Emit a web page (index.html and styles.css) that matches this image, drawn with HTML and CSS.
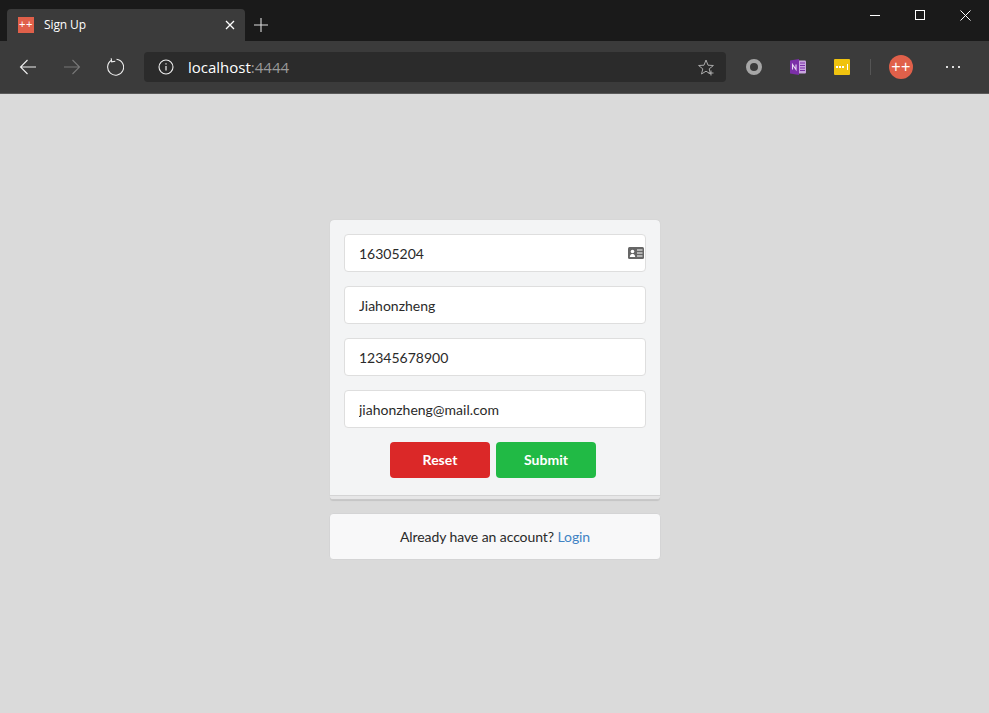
FILE: index.html
```html
<!DOCTYPE html>
<html lang="en">
<head>
<meta charset="UTF-8">
<meta name="viewport" content="width=device-width, initial-scale=1.0">
<title>Sign Up</title>
<link rel="stylesheet" href="styles.css">
</head>
<body>

<div class="titlebar">
  <div class="tab">
    <span class="favicon">++</span>
    <span class="tab-title">Sign Up</span>
    <svg class="tab-close" width="10" height="10" viewBox="0 0 10 10"><path d="M1 1l8 8M9 1l-8 8" stroke="#fff" stroke-width="1.3" fill="none"/></svg>
  </div>
  <svg class="new-tab" width="14" height="14" viewBox="0 0 14 14"><path d="M7 0v14M0 7h14" stroke="#ddd" stroke-width="1.1" fill="none"/></svg>
  <div class="window-btns">
    <svg width="10" height="10" viewBox="0 0 10 10"><path d="M0 5.500h10" stroke="#fff" fill="none"/></svg>
    <svg width="10" height="10" viewBox="0 0 10 10"><rect x=".5" y=".5" width="9" height="9" stroke="#fff" fill="none"/></svg>
    <svg width="11" height="11" viewBox="0 0 11 11"><path d="M.5.5l10 10M10.500.5l-10 10" stroke="#fff" fill="none"/></svg>
  </div>
</div>

<div class="toolbar">
  <svg class="nav-icon" width="18" height="16" viewBox="0 0 18 16"><path d="M17 8H1.500M8.500 1L1.500 8l7 7" stroke="#eee" stroke-width="1.1" fill="none"/></svg>
  <svg class="nav-icon" width="18" height="16" viewBox="0 0 18 16"><path d="M1 8h15.500M9.500 1l7 7-7 7" stroke="#777" stroke-width="1.1" fill="none"/></svg>
  <svg class="nav-icon" width="18" height="18" viewBox="0 0 18 18"><path d="M5.500 2.300A8 8 0 1 0 10.500 1.200M5.200 .2l.5 3.700 3.600-.6" stroke="#eee" stroke-width="1.1" fill="none"/></svg>
  <div class="address">
    <svg width="16" height="16" viewBox="0 0 16 16"><circle cx="8" cy="8" r="7" stroke="#eee" stroke-width="1.1" fill="none"/><path d="M8 7v4.500M8 4.200v1.400" stroke="#eee" stroke-width="1.2" fill="none"/></svg>
    <span class="url">localhost<span class="port">:4444</span></span>
    <svg class="star" width="17" height="17" viewBox="0 0 17 17"><path d="M8 1l2 5.200 5.400.3-4.200 3.400 1.300 5.100L8 12.200l-4.500 2.800 1.300-5.100L.6 6.500l5.400-.3z" stroke="#aaa" fill="none"/><path d="M13 11.500v5M10.500 14h5" stroke="#aaa" fill="none"/></svg>
  </div>
  <div class="extensions">
    <svg width="16" height="16" viewBox="0 0 16 16"><circle cx="8" cy="8" r="6" stroke="#a6a6a6" stroke-width="4" fill="none"/></svg>
    <svg width="16" height="16" viewBox="0 0 16 16"><rect x="7" y="1.500" width="9" height="13" rx="1" fill="#c9a6e0"/><path d="M0 1.500L9 0v16L0 14.500z" fill="#7b2fa8"/><path d="M10 4h5M10 6.500h5M10 9h5M10 11.500h5" stroke="#7b2fa8" fill="none"/><path d="M2.500 10.500v-5l3.500 5v-5" stroke="#e8d8f4" stroke-width="1.1" fill="none"/></svg>
    <svg width="16" height="16" viewBox="0 0 16 16"><rect width="16" height="16" rx="1" fill="#f0c30f"/><path d="M2 8h2M5 8h2M8 8h2" stroke="#fff" stroke-width="2" fill="none"/><path d="M13.500 5v6" stroke="#fff" fill="none"/></svg>
  </div>
  <div class="divider"></div>
  <div class="avatar">++</div>
  <div class="more"><span></span><span></span><span></span></div>
</div>

<main class="page">
  <form class="signup-card">
    <div class="field">
      <input class="input" type="text" value="16305204">
      <svg class="field-icon" width="16" height="12" viewBox="0 0 16 12"><rect width="16" height="12" rx="1.500" fill="#666"/><circle cx="4.500" cy="4.500" r="1.800" fill="#fff"/><path d="M1.800 10c0-4 5.400-4 5.400 0z" fill="#fff"/><path d="M9 3h5.500M9 6h5.500M9 9h5.500" stroke="#fff" stroke-width="1.200" fill="none"/></svg>
    </div>
    <input class="input" type="text" value="Jiahonzheng">
    <input class="input" type="text" value="12345678900">
    <input class="input" type="text" value="jiahonzheng@mail.com">
    <div class="actions">
      <button class="btn btn-reset" type="button">Reset</button>
      <button class="btn btn-submit" type="button">Submit</button>
    </div>
  </form>
  <div class="login-box">Already have an account? <a href="#">Login</a></div>
</main>

</body>
</html>
```
FILE: styles.css
```css
* {
  box-sizing: border-box;
}

body {
  margin: 0;
  height: 713px;
  overflow: hidden;
  display: flex;
  flex-direction: column;
  font-family: Lato, sans-serif;
  background: #dadada;
}

/* browser chrome */
.titlebar {
  height: 41px;
  flex: none;
  display: flex;
  align-items: flex-end;
  padding-left: 7px;
  background: #1a1a1a;
}

.tab {
  width: 238px;
  height: 32px;
  display: flex;
  align-items: center;
  padding: 0 10px 0 11px;
  background: #3b3b3b;
  border-radius: 4px 4px 0 0;
}

.favicon {
  width: 16px;
  height: 16px;
  margin-right: 10px;
  background: #e0604a;
  color: #fff;
  font: 11px/15px "Liberation Sans", sans-serif;
  letter-spacing: 0.5px;
  text-align: center;
}

.tab-title {
  flex: 1;
  margin-top: -2px;
  color: #fff;
  font: 12px "Open Sans", sans-serif;
  letter-spacing: -0.1px;
}

.new-tab {
  margin: 0 0 9px 9px;
}

.window-btns {
  margin: 0 18px auto auto;
  padding-top: 10px;
  display: flex;
  gap: 35px;
}

.toolbar {
  height: 53px;
  flex: none;
  display: flex;
  align-items: center;
  padding-left: 19px;
  background: #3b3b3b;
  border-bottom: 1px solid #5a5a5a;
}

.nav-icon {
  margin-right: 26px;
}

.nav-icon:nth-child(3) {
  margin: 0 20px 0 -1px;
}

.address {
  width: 582px;
  height: 30px;
  display: flex;
  align-items: center;
  padding: 0 11px 0 14px;
  background: #2b2b2b;
  border-radius: 4px;
}

.url {
  flex: 1;
  margin-left: 14px;
  color: #fff;
  font: 15px "Open Sans", sans-serif;
}

.port {
  color: #9a9a9a;
}

.extensions {
  display: flex;
  gap: 28px;
  margin-left: 20px;
}

.divider {
  width: 1px;
  height: 16px;
  margin: 0 18px 0 20px;
  background: #555;
}

.avatar {
  width: 24px;
  height: 24px;
  border-radius: 50%;
  background: #e0604a;
  color: #fff;
  font: 16px/24px "Liberation Sans", sans-serif;
  letter-spacing: 0.5px;
  text-align: center;
}

.more {
  display: flex;
  gap: 4px;
  margin-left: 33px;
}

.more span {
  width: 2px;
  height: 2px;
  background: #ddd;
}

/* page */
.page {
  flex: 1;
  padding: 126px 0 0 1px;
  display: flex;
  flex-direction: column;
  align-items: center;
}

.signup-card {
  position: relative;
  width: 330px;
  height: 276px;
  display: flex;
  flex-direction: column;
  gap: 14px;
  padding: 14px;
  background: #f3f4f5;
  border-bottom: 1px solid #d4d4d5;
  border-radius: 4px 4px 0 0;
  box-shadow: 0 0 1px rgba(0, 0, 0, 0.15);
}

/* stacked edge under the card */
.signup-card::after {
  content: "";
  position: absolute;
  left: 0;
  right: 0;
  top: 100%;
  height: 3px;
  margin-top: 1px;
  background: #e6e6e7;
  border-bottom: 1px solid #c8c8c9;
  border-radius: 0 0 3px 3px;
  box-shadow: 0 1px 1px rgba(0, 0, 0, 0.1);
}

.field {
  position: relative;
}

.field-icon {
  position: absolute;
  right: 2px;
  top: 13px;
}

.input {
  width: 100%;
  height: 38px;
  padding: 0 14px;
  background: #fff;
  border: 1px solid #dedede;
  border-radius: 4px;
  color: #2a2a2a;
  font: 14px Lato, sans-serif;
}

.actions {
  display: flex;
  justify-content: center;
  gap: 6px;
  padding-right: 4px;
}

.btn {
  width: 100px;
  height: 36px;
  padding: 0 0 2px;
  border: none;
  border-radius: 4px;
  color: #fff;
  font: 700 14px Lato, sans-serif;
}

.btn-reset {
  background: #db2828;
}

.btn-submit {
  background: #21ba45;
}

.login-box {
  width: 332px;
  height: 47px;
  margin-top: 17px;
  background: #f8f8f9;
  border: 1px solid #d4d4d5;
  border-radius: 4px;
  color: #2a2a2a;
  font-size: 14px;
  letter-spacing: -0.08px;
  line-height: 45px;
  text-align: center;
}

.login-box a {
  color: #4183c4;
  text-decoration: none;
}
```
